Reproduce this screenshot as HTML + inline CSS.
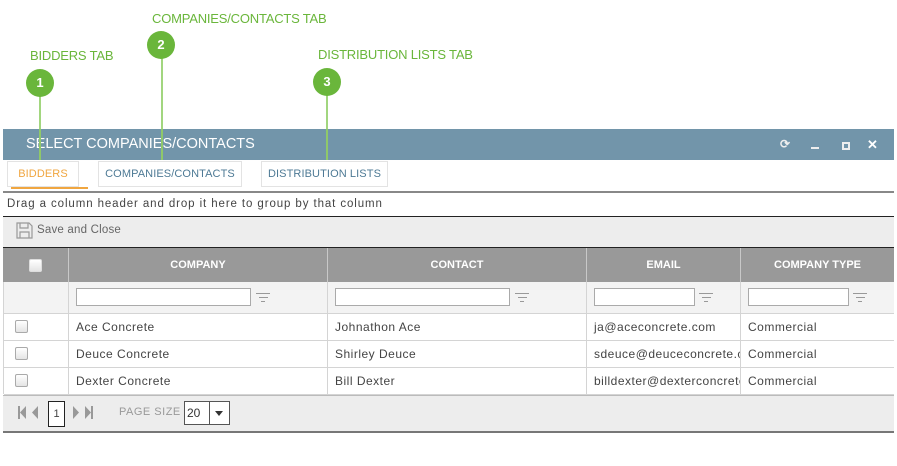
<!DOCTYPE html>
<html><head><meta charset="utf-8"><style>
*{margin:0;padding:0;box-sizing:border-box}
body{width:897px;height:466px;background:#fff;font-family:"Liberation Sans",sans-serif;position:relative;overflow:hidden}
.a{position:absolute}
.lbl{color:#6ab63b;font-size:13px;letter-spacing:-0.2px}
.circ{width:28px;height:28px;border-radius:50%;background:#6ab63b;color:#fff;font-weight:bold;font-size:13px;text-align:center;line-height:28px}
.vl{width:2px;background:#a2d67f}
.tab{top:161px;height:26px;border:1px solid #e3e3e3;font-size:11px;color:#4e7a95;text-align:center;line-height:24px;letter-spacing:0.1px}
.hd{top:248px;height:34px;background:#999;color:#fff;font-size:11px;font-weight:bold;text-align:center;line-height:34px;border-right:1px solid #c8c8c8}
.cell{height:27px;border-bottom:1px solid #d4d4d4;border-right:1px solid #d4d4d4;font-size:12px;color:#444;line-height:26px;padding-left:7px;overflow:hidden;white-space:nowrap;letter-spacing:0.5px}
.inp{height:18px;border:1px solid #aaa;background:#fff}
.cb{width:13px;height:13px;border:1px solid #aaa;border-radius:2px;background:linear-gradient(#fff,#e4e4e4)}
.flt{width:16px}
.flt i{display:block;height:1px;background:#999;margin:0 auto 3px}
</style></head><body>
<div class="a lbl" style="left:30px;top:48px">BIDDERS TAB</div>
<div class="a lbl" style="left:152px;top:11px">COMPANIES/CONTACTS TAB</div>
<div class="a lbl" style="left:318px;top:47px">DISTRIBUTION LISTS TAB</div>
<div class="a vl" style="left:39px;top:90px;height:70px"></div>
<div class="a vl" style="left:161px;top:55px;height:105px"></div>
<div class="a vl" style="left:326px;top:90px;height:70px"></div>

<div class="a" style="left:3px;top:129px;width:891px;height:31px;background:#7295aa"></div>
<div class="a" style="left:26px;top:136px;color:#fff;font-size:14.5px">SELECT COMPANIES/CONTACTS</div>
<div class="a" style="left:780px;top:137px;color:#eee;font-size:12px;font-weight:bold">⟳</div>
<div class="a" style="left:811px;top:147px;width:8px;height:2px;background:#eee"></div>
<div class="a" style="left:842px;top:142px;width:8px;height:8px;border:2px solid #eee"></div>
<div class="a" style="left:867px;top:137px;color:#fff;font-size:13px;font-weight:bold">✕</div>

<div class="a circ" style="left:26px;top:69px">1</div>
<div class="a circ" style="left:147px;top:31px">2</div>
<div class="a circ" style="left:313px;top:68px">3</div>
<div class="a vl" style="left:39px;top:129px;height:31px;background:#8fc86a"></div>
<div class="a vl" style="left:161px;top:129px;height:31px;background:#8fc86a"></div>
<div class="a vl" style="left:326px;top:129px;height:31px;background:#8fc86a"></div>

<div class="a tab" style="left:7px;width:72px;color:#f0a640">BIDDERS</div>
<div class="a" style="left:11px;top:187px;width:77px;height:2px;background:#f0a640"></div>
<div class="a tab" style="left:98px;width:144px">COMPANIES/CONTACTS</div>
<div class="a tab" style="left:261px;width:127px">DISTRIBUTION LISTS</div>
<div class="a" style="left:3px;top:191px;width:891px;height:2px;background:#888"></div>
<div class="a" style="left:7px;top:198px;font-size:11.5px;color:#444;letter-spacing:0.9px">Drag a column header and drop it here to group by that column</div>
<div class="a" style="left:3px;top:216px;width:891px;height:32px;background:#ededed;border-top:1px solid #222;border-bottom:1px solid #222"></div>
<svg class="a" style="left:16px;top:222px" width="17" height="17" viewBox="0 0 17 17"><path d="M1 1h12l3 3v12H1z M4 1v5h8V1 M4 16v-6h9v6" fill="none" stroke="#999" stroke-width="1.2"/></svg>
<div class="a" style="left:37px;top:224px;font-size:11.5px;color:#666;letter-spacing:0.2px">Save and Close</div>

<div class="a hd" style="left:3px;width:66px"><span class="cb" style="display:inline-block;vertical-align:middle;border-color:#ddd"></span></div>
<div class="a hd" style="left:69px;width:259px">COMPANY</div>
<div class="a hd" style="left:328px;width:259px">CONTACT</div>
<div class="a hd" style="left:587px;width:154px">EMAIL</div>
<div class="a hd" style="left:741px;width:153px;border-right:none">COMPANY TYPE</div>

<div class="a" style="left:3px;top:282px;width:891px;height:32px;background:#f3f3f3;border-bottom:1px solid #d4d4d4"></div>
<div class="a" style="left:68px;top:282px;width:1px;height:112px;background:#d4d4d4"></div>
<div class="a" style="left:327px;top:282px;width:1px;height:112px;background:#d4d4d4"></div>
<div class="a" style="left:586px;top:282px;width:1px;height:112px;background:#d4d4d4"></div>
<div class="a" style="left:740px;top:282px;width:1px;height:112px;background:#d4d4d4"></div>
<div class="a" style="left:3px;top:282px;width:1px;height:112px;background:#d4d4d4"></div>
<div class="a inp" style="left:76px;top:288px;width:175px"></div>
<div class="a inp" style="left:335px;top:288px;width:175px"></div>
<div class="a inp" style="left:594px;top:288px;width:101px"></div>
<div class="a inp" style="left:748px;top:288px;width:101px"></div>
<div class="a flt" style="left:255px;top:293px"><i style="width:14px"></i><i style="width:9px"></i><i style="width:4px"></i></div>
<div class="a flt" style="left:514px;top:293px"><i style="width:14px"></i><i style="width:9px"></i><i style="width:4px"></i></div>
<div class="a flt" style="left:698px;top:293px"><i style="width:14px"></i><i style="width:9px"></i><i style="width:4px"></i></div>
<div class="a flt" style="left:852px;top:293px"><i style="width:14px"></i><i style="width:9px"></i><i style="width:4px"></i></div>

<div class="a" style="left:4px;top:314px;width:890px">
<div style="display:flex"><div class="cell" style="width:65px;padding-left:11px;padding-top:6px"><div class="cb"></div></div><div class="cell" style="width:259px">Ace Concrete</div><div class="cell" style="width:259px">Johnathon Ace</div><div class="cell" style="width:154px">ja@aceconcrete.com</div><div class="cell" style="width:153px;border-right:none">Commercial</div></div>
<div style="display:flex"><div class="cell" style="width:65px;padding-left:11px;padding-top:6px"><div class="cb"></div></div><div class="cell" style="width:259px">Deuce Concrete</div><div class="cell" style="width:259px">Shirley Deuce</div><div class="cell" style="width:154px">sdeuce@deuceconcrete.com</div><div class="cell" style="width:153px;border-right:none">Commercial</div></div>
<div style="display:flex"><div class="cell" style="width:65px;padding-left:11px;padding-top:6px"><div class="cb"></div></div><div class="cell" style="width:259px">Dexter Concrete</div><div class="cell" style="width:259px">Bill Dexter</div><div class="cell" style="width:154px">billdexter@dexterconcrete.com</div><div class="cell" style="width:153px;border-right:none">Commercial</div></div>
</div>

<div class="a" style="left:3px;top:395px;width:891px;height:38px;background:#ededed;border-top:1px solid #bbb;border-bottom:2px solid #777"></div>
<svg class="a" style="left:16px;top:405px" width="82" height="15" viewBox="0 0 82 15"><path d="M2 1h2v13H2z M4 7.5L10 1v13z M16 7.5L22 1v13z" fill="#999"/><path d="M57 1l6 6.5-6 6.5z M69 1l6 6.5-6 6.5z M75 1h2v13h-2z" fill="#999"/></svg>
<div class="a" style="left:48px;top:401px;width:17px;height:26px;border:1px solid #222;background:#fff;font-size:11px;color:#444;text-align:center;line-height:24px">1</div>
<div class="a" style="left:119px;top:406px;font-size:11px;color:#999;letter-spacing:0.5px">PAGE SIZE</div>
<div class="a" style="left:184px;top:401px;width:46px;height:24px;border:1px solid #555;background:#fff;font-size:12px;color:#333;line-height:22px;padding-left:2px">20</div>
<div class="a" style="left:209px;top:401px;width:1px;height:24px;background:#555"></div>
<div class="a" style="left:215px;top:411px;width:0;height:0;border-left:4px solid transparent;border-right:4px solid transparent;border-top:5px solid #333"></div>
</body></html>
